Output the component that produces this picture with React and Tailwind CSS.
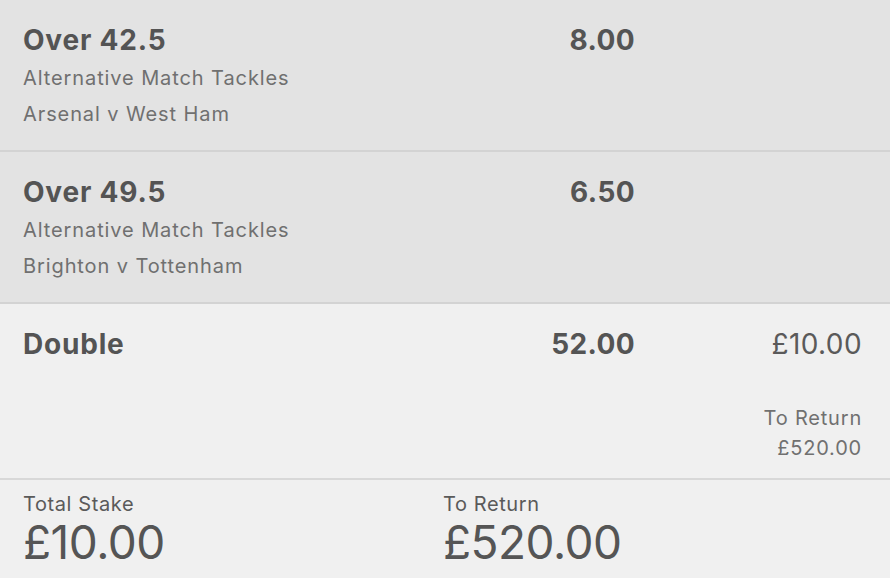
import React from "react";

const legs = [
  {
    line: "Over 42.5",
    market: "Alternative Match Tackles",
    event: "Arsenal v West Ham",
    odds: "8.00",
  },
  {
    line: "Over 49.5",
    market: "Alternative Match Tackles",
    event: "Brighton v Tottenham",
    odds: "6.50",
  },
];

const font = { fontFamily: "Inter, 'Noto Sans', sans-serif" };

const Leg = ({ leg }) => (
  <div className="bg-[#e3e3e3] border-b-2 border-[#d3d3d3] pl-[23px] pt-[22px] pb-[18px] flex">
    <div className="w-[511px] shrink-0">
      <div className="text-[28px] leading-[36px] font-bold text-[#545454] tracking-[0.8px]">
        {leg.line}
      </div>
      <div className="mt-[2px] text-[20px] leading-[36px] text-[#707070] tracking-[0.9px]">
        {leg.market}
      </div>
      <div className="text-[20px] leading-[36px] text-[#707070] tracking-[0.9px]">
        {leg.event}
      </div>
    </div>
    <div className="w-[101px] shrink-0 text-right text-[28px] leading-[36px] font-bold text-[#545454] tracking-[0.4px]">
      {leg.odds}
    </div>
  </div>
);

const App = () => {
  return (
    <div className="w-[890px] h-[578px] overflow-hidden bg-[#f0f0f0]" style={font}>
      {legs.map((leg) => (
        <Leg key={leg.line} leg={leg} />
      ))}
      <div className="bg-[#f0f0f0] border-b-2 border-[#d8d8d8] pl-[23px] pr-[28px] pt-[22px] pb-[15px]">
        <div className="flex">
          <div className="w-[511px] shrink-0 text-[28px] leading-[36px] font-bold text-[#545454] tracking-[0.8px]">
            Double
          </div>
          <div className="w-[101px] shrink-0 text-right text-[28px] leading-[36px] font-bold text-[#545454] tracking-[0.4px]">
            52.00
          </div>
          <div className="flex-1 text-right text-[28px] leading-[36px] text-[#5a5a5a] tracking-[0.4px]">
            £10.00
          </div>
        </div>
        <div className="mt-[41px] text-right text-[20px] leading-[30px] text-[#707070] tracking-[0.8px]">
          <div>To Return</div>
          <div>£520.00</div>
        </div>
      </div>
      <div className="grid grid-cols-[420px_1fr] pl-[23px] pt-[12px]">
        <div>
          <div className="text-[20px] leading-[24px] text-[#5a5a5a] tracking-[0.6px]">Total Stake</div>
          <div className="text-[46px] leading-[52px] text-[#555555] tracking-[-0.5px]">
            £10.00
          </div>
        </div>
        <div>
          <div className="text-[20px] leading-[24px] text-[#5a5a5a] tracking-[0.6px]">To Return</div>
          <div className="text-[46px] leading-[52px] text-[#555555] tracking-[-0.5px]">
            £520.00
          </div>
        </div>
      </div>
    </div>
  );
};

export default App;
